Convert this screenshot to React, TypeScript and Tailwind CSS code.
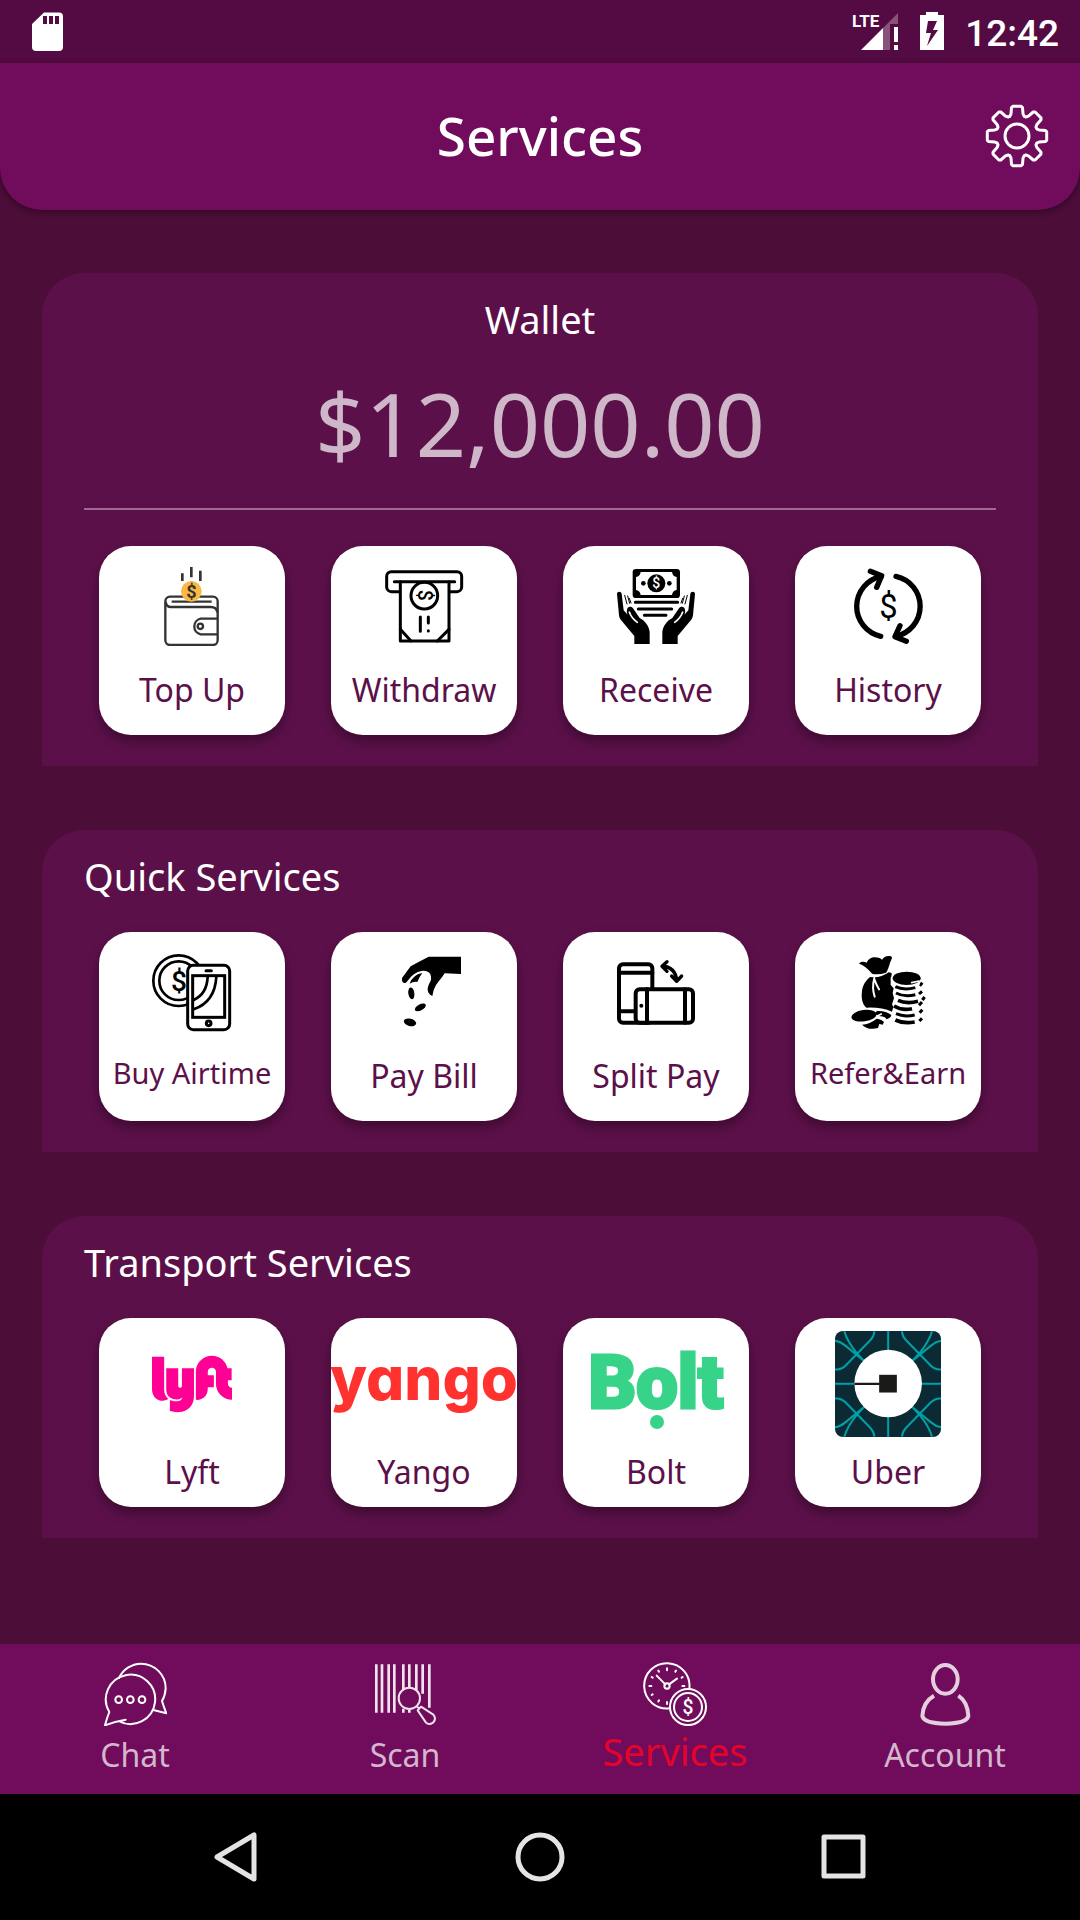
import type { ReactNode } from "react";
import { FaLyft } from "react-icons/fa";

type DollarProps = { x: number; y: number; size: number; fill?: string; weight?: number };

function Dollar({ x, y, size, fill = "#000", weight = 400 }: DollarProps) {
  return (
    <text x={x} y={y} fontSize={size} fontWeight={weight} fill={fill} stroke="none" textAnchor="middle" fontFamily="Roboto, sans-serif">
      $
    </text>
  );
}

function TileIcon({ viewBox, children }: { viewBox: string; children: ReactNode }) {
  return (
    <svg viewBox={viewBox} className="size-20" fill="none" stroke="#000" strokeLinecap="round" strokeLinejoin="round" aria-hidden="true">
      {children}
    </svg>
  );
}

function TopUpIcon() {
  return (
    <TileIcon viewBox="216 108 240 240">
      <g stroke="#333" strokeWidth="7" strokeLinecap="butt">
        <rect x="256" y="200" width="157" height="145" rx="14" />
        <path d="M275 215H395" />
        <path d="M257 216q2 15 16 15H392q18 0 20 16" />
        <path d="M412 266H362a24 24 0 0 0 0 47H412" />
        <circle cx="361" cy="289" r="8" />
        <path d="M307 130v23M334 111v31M361 122v31" strokeWidth="8" />
      </g>
      <circle cx="334" cy="184" r="31" fill="#fbb843" stroke="none" />
      <Dollar x={334} y={203} size={54} fill="#333" weight={700} />
    </TileIcon>
  );
}

function WithdrawIcon() {
  return (
    <TileIcon viewBox="912 108 240 240">
      <g strokeWidth="9">
        <path d="M958 185H934a14 14 0 0 1-14-14V139a14 14 0 0 1 14-14H1131a14 14 0 0 1 14 14v32a14 14 0 0 1-14 14H1108" />
        <path d="M943 155H1124" />
        <path d="M961 155V333H1107V155" />
        <circle cx="1033" cy="197" r="40" />
        <path d="M961 298L993 333M1107 298L1072 333" />
        <path d="M1021 261V304M1045 261V279M1045 302v1" />
      </g>
      <g transform="rotate(90 1033 196)">
        <Dollar x={1033} y={216} size={58} weight={500} />
      </g>
    </TileIcon>
  );
}

function Hand() {
  return (
    <g>
      <path
        d="M231 192c0-8 13-9 14 0l6 49 12 13c-3-6-3-8-2-14 1-10 11-13 18-5l20 29c17 9 28 24 30 42v36H283V318L243 270c-4-5-5-8-6-14z"
        fill="#000"
        stroke="none"
      />
      <path d="M268 246q6 18 24 31" stroke="#fff" strokeWidth="5" />
      <path d="M254 196l7 26M263 198l6 22M268 205l5 14" strokeWidth="3" />
    </g>
  );
}

function ReceiveIcon() {
  return (
    <TileIcon viewBox="228 108 240 240">
      <rect x="278" y="117" width="142" height="87" rx="10" fill="#000" stroke="none" />
      <path d="M302 126H396q2 14 14 15V180q-12 2-14 15H302q-2-13-14-15V141q12-1 14-15z" fill="#fff" stroke="none" />
      <circle cx="349" cy="160" r="27" fill="#000" stroke="none" />
      <Dollar x={349} y={175} size={42} fill="#fff" weight={500} />
      <circle cx="310" cy="160" r="7" fill="#000" stroke="none" />
      <circle cx="388" cy="160" r="7" fill="#000" stroke="none" />
      <path d="M286 217H413M295 237H395M313 256H378" strokeWidth="9" />
      <Hand />
      <g transform="translate(696 0) scale(-1 1)">
        <Hand />
      </g>
    </TileIcon>
  );
}

function HistoryIcon() {
  return (
    <TileIcon viewBox="924 108 240 240">
      <g strokeWidth="16">
        <path d="M1022 319A92 92 0 0 1 1024 139" />
        <path d="M991 124L1025 137L1010 172" />
        <path d="M1068 139A92 92 0 0 1 1067 319" />
        <path d="M1080 287L1065 320L1099 334" />
      </g>
      <Dollar x={1045} y={264} size={98} />
    </TileIcon>
  );
}

function AirtimeIcon() {
  return (
    <TileIcon viewBox="216 396 240 240">
      <g strokeWidth="8">
        <circle cx="296" cy="482" r="76" />
        <circle cx="296" cy="482" r="58" />
      </g>
      <Dollar x={297} y={512} size={84} weight={500} />
      <g strokeWidth="9">
        <rect x="323" y="436" width="126" height="193" rx="17" fill="#fff" />
        <rect x="338" y="467" width="96" height="125" strokeLinejoin="miter" />
        <path d="M378 452H394" />
        <circle cx="386" cy="610" r="7" />
        <path d="M383 470q-2 52-42 70M409 470q-4 76-68 98" strokeWidth="8" />
      </g>
    </TileIcon>
  );
}

function PayBillIcon() {
  return (
    <TileIcon viewBox="912 396 240 240">
      <g fill="#000" stroke="none">
        <path d="M1046 410H1143V462L1094 460C1086 474 1078 480 1068 495Q1060 508 1057 528Q1042 522 1043 505Q1045 494 1052 482Q1056 468 1048 458Q1038 450 1024 453Q1002 458 988 476L978 488Q967 491 966 480V474L992 439Q1018 424 1046 410z" />
        <path d="M1027 459Q998 464 989 491Q1000 484 1012 486Q1017 472 1027 459z" />
        <ellipse cx="994" cy="520" rx="9" ry="18" transform="rotate(-8 994 520)" />
        <ellipse cx="1021" cy="562" rx="18" ry="9" transform="rotate(-28 1021 562)" />
        <ellipse cx="990" cy="607" rx="19" ry="11" transform="rotate(14 990 607)" />
      </g>
    </TileIcon>
  );
}

function SplitPayIcon() {
  return (
    <TileIcon viewBox="228 396 240 240">
      <g strokeWidth="12">
        <rect x="237" y="433" width="100" height="175" rx="12" />
        <path d="M237 458H337M237 574H288" />
        <rect x="287" y="508" width="172" height="100" rx="12" fill="#fff" />
        <path d="M321 508V608M435 508V608" />
      </g>
      <circle cx="304" cy="557" r="6" fill="#000" stroke="none" />
      <path d="M367 438Q407 442 410 482M381 425L366 439L381 454M395 468L410 484L425 468" strokeWidth="10" />
    </TileIcon>
  );
}

function ReferIcon() {
  return (
    <TileIcon viewBox="924 396 240 240">
      <g fill="#000" stroke="none">
        <path d="M957 431c6-8 15-7 23-3 6-12 14-16 24-16s16 2 22 7c7-9 14-12 22-11s9 4 7 9c-7 13-9 32-17 41q-20 7-40 4c-12-11-24-27-41-31z" />
        <path d="M990 471q30 5 56-14l9 2q0 12-3 14v22l9 10-3 14 4 16-6 18 4 8-4 14q-32-14-77-12c-12-10-16-28-13-50 3-20 12-32 24-42z" />
        <ellipse cx="1100" cy="475" rx="42" ry="20" />
        <ellipse cx="972" cy="587" rx="38" ry="17" transform="rotate(-8 972 587)" />
        <path d="M1010 573q26-2 44 12-2 10-14 13-6-10-24-10l-10-6z" />
        <path d="M966 614q24-2 44-18 16 2 22 10l-4 8-10-2-4 12q-30 8-48-10z" />
      </g>
      <path d="M1003 474q-8 30 1 56M1003 478q8 20 14 30" stroke="#fff" strokeWidth="6" />
      <g strokeWidth="9" strokeLinecap="butt">
        <path d="M1066 500q24 12 60 3" />
        <path d="M1068 519q24 13 58 5" />
        <path d="M1074 541q26 12 60 3" strokeWidth="11" />
        <path d="M1062 558q24 15 54 8" strokeWidth="11" />
        <path d="M1068 581q24 11 56 4" />
        <path d="M1066 600q24 12 58 6" strokeWidth="11" />
        <path d="M1139 497l8-9M1137 522l9-8M1147 540l7-9M1137 556l9-10M1139 578l8-9M1138 603l8-8" />
      </g>
      <path d="M1115 488l22-5v10M1012 588l12-6" stroke="#fff" strokeWidth="5" />
    </TileIcon>
  );
}

function LyftLogo() {
  return <FaLyft className="size-20 text-[#ff0094]" aria-hidden="true" />;
}

function YangoLogo() {
  return (
    <span className="pb-3 font-[Inter] text-[60px] leading-none font-extrabold text-[#ff3230] [font-feature-settings:'cv11']" aria-hidden="true">
      yango
    </span>
  );
}

function BoltLogo() {
  return (
    <svg viewBox="0 0 150 120" className="h-[120px] w-[150px]" fill="#37d388" aria-hidden="true">
      <text x="75" y="84" fontSize="74" fontWeight="900" textAnchor="middle" fontFamily="Roboto, sans-serif" stroke="#37d388" strokeWidth="3">
        Bolt
      </text>
      <circle cx="76" cy="98" r="7" />
    </svg>
  );
}

function UberCorner() {
  return (
    <path d="M886 390Q902 392 916 404L972 450M914 362Q922 392 952 428L972 450M1004 362Q1002 378 992 388L918 464Q904 478 886 476" />
  );
}

function UberLogo() {
  return (
    <svg viewBox="886 361 317 317" className="size-[106px] rounded-lg" fill="none" aria-hidden="true">
      <rect x="886" y="361" width="317" height="317" fill="#0b2a34" />
      <g stroke="#00a0a8" strokeWidth="6">
        <UberCorner />
        <g transform="translate(2090 0) scale(-1 1)">
          <UberCorner />
        </g>
        <g transform="translate(0 1039) scale(1 -1)">
          <UberCorner />
        </g>
        <g transform="translate(2090 1039) scale(-1 -1)">
          <UberCorner />
        </g>
        <path d="M1045 361V678M886 519H1203" />
      </g>
      <circle cx="1045" cy="518" r="101" fill="#fff" />
      <path d="M944 519H1020" stroke="#1a1a18" strokeWidth="7" />
      <rect x="1018" y="492" width="53" height="53" fill="#1a1a18" />
    </svg>
  );
}

function gearPath(): string {
  const points: string[] = [];
  for (let i = 0; i < 8; i++) {
    const angle = i * 45;
    const corners: [number, number][] = [
      [21, angle - 20],
      [23, angle - 15],
      [29, angle - 11],
      [30, angle - 8],
      [30, angle + 8],
      [29, angle + 11],
      [23, angle + 15],
      [21, angle + 20],
    ];
    for (const [r, deg] of corners) {
      const a = ((deg - 90) * Math.PI) / 180;
      points.push(`${(32 + r * Math.cos(a)).toFixed(1)} ${(32 + r * Math.sin(a)).toFixed(1)}`);
    }
  }
  return `M${points.join("L")}z`;
}

function GearIcon() {
  return (
    <svg viewBox="0 0 64 64" className="size-16" fill="none" stroke="#fff" strokeWidth="3" strokeLinejoin="round" aria-hidden="true">
      <path d={gearPath()} />
      <circle cx="32" cy="32" r="12" />
    </svg>
  );
}

function NavIcon({ viewBox, stroke, width, children }: { viewBox: string; stroke: string; width: number; children: ReactNode }) {
  return (
    <svg viewBox={viewBox} className="size-16" fill="none" stroke={stroke} strokeWidth={width} strokeLinecap="round" strokeLinejoin="round" aria-hidden="true">
      {children}
    </svg>
  );
}

function ChatIcon() {
  return (
    <NavIcon viewBox="129 96 192 192" stroke="#fff" width={6}>
      <path d="M177 144A74 74 0 0 1 243 101A74 74 0 0 1 317 175Q316 196 306 213Q311 230 319 250L280 240" />
      <path d="M178 274A74 74 0 1 0 148 246Q140 266 135 286Q165 274 197 269" />
      <circle cx="176" cy="209" r="10" />
      <circle cx="211" cy="209" r="10" />
      <circle cx="246" cy="209" r="10" />
    </NavIcon>
  );
}

function ScanIcon() {
  return (
    <NavIcon viewBox="939 96 192 192" stroke="#f1e3ee" width={6}>
      <g strokeWidth="8" strokeLinecap="butt">
        <path d="M949 103V248M966 103V248M986 103V248M1003 103V248M1030 103V180M1048 103V172M1069 103V180M1088 103V191M1108 103V233" />
        <path d="M1030 236V248M1048 240V248" />
      </g>
      <circle cx="1048" cy="205" r="32" />
      <path d="M1071 230l6 5M1083 230L1120 254Q1130 266 1120 277Q1107 287 1098 278L1073 241z" />
    </NavIcon>
  );
}

function ServicesIcon() {
  return (
    <NavIcon viewBox="309 96 192 192" stroke="#fff" width={6}>
      <path d="M389 235A68 68 0 1 1 448 176" />
      <path d="M350 137L376 163M387 163L411 146" />
      <circle cx="381" cy="168" r="8" />
      <path d="M381 115v6M381 216v6M328 168h6M427 168h6M355 122l2 3M408 122l-2 3M335 141l3 2M428 141l-3 2M335 195l3-2M355 214l2-3" />
      <circle cx="444" cy="231" r="54" />
      <circle cx="444" cy="231" r="42" />
      <Dollar x={444} y={251} size={58} fill="#fff" weight={500} />
    </NavIcon>
  );
}

function AccountIcon() {
  return (
    <NavIcon viewBox="1119 96 192 192" stroke="#e4cfe0" width={12}>
      <ellipse cx="1216" cy="148" rx="37" ry="43" />
      <path d="M1182 197Q1149 216 1147 258Q1152 280 1216 281Q1280 280 1285 258Q1283 216 1255 197" strokeLinecap="butt" />
    </NavIcon>
  );
}

function StatusBar() {
  return (
    <div className="flex items-center justify-between bg-[#540a42] pr-[21px] pl-8">
      <svg viewBox="0 0 32 63" className="h-[63px] w-8" fill="#fff" aria-hidden="true">
        <path fillRule="evenodd" d="M12 12.500H27a4 4 0 0 1 4 4V47a4 4 0 0 1-4 4H4a4 4 0 0 1-4-4V24zM11 16v8h4v-8zM17 16v8h4v-8zM23 16v8h4v-8z" />
      </svg>
      <div className="flex items-center">
        <svg viewBox="0 0 48 63" className="h-[63px] w-12" fill="#fff" role="img" aria-label="LTE">
          <text x="0" y="27" fontSize="17" fontWeight="700" fontFamily="Roboto, sans-serif">
            LTE
          </text>
          <path d="M9 50L31 28V50z" />
          <path d="M31 28L46 13V24H38V50H31z" opacity="0.3" />
          <path d="M42 27h4v15h-4zM42 45h4v5h-4z" />
        </svg>
        <svg viewBox="0 0 24 63" className="ml-5 h-[63px] w-6" fill="#fff" aria-hidden="true">
          <path fillRule="evenodd" d="M6 12H18V15H24V50H0V15H6zM8 21L6 33H11L7 46L18 30H13L17 21z" />
        </svg>
        <span className="ml-[21px] pt-1 font-[Roboto] text-[37px] leading-[42px] font-medium text-white">12:42</span>
      </div>
    </div>
  );
}

type Tile = { label: string; icon: ReactNode; small?: boolean };

function ServiceTile({ tile, logo }: { tile: Tile; logo?: boolean }) {
  return (
    <button
      type="button"
      className="flex h-[189px] w-full max-w-[186px] flex-col items-center rounded-[32px] bg-white whitespace-nowrap text-[#5c1049] shadow-[0_6px_12px_rgba(0,0,0,0.35)]"
    >
      {logo ? (
        <span className="mt-1.5 mb-1.5 flex h-[120px] items-center justify-center">{tile.icon}</span>
      ) : (
        <span className="mt-5 mb-[22px] flex h-20 items-center justify-center">{tile.icon}</span>
      )}
      {tile.small ? (
        <span className="text-[29px] leading-[38px]">{tile.label}</span>
      ) : (
        <span className="text-[32px] leading-[44px]">{tile.label}</span>
      )}
    </button>
  );
}

function TileRow({ tiles, logo }: { tiles: Tile[]; logo?: boolean }) {
  return (
    <div className="-mx-2 grid grid-cols-4 justify-items-center">
      {tiles.map((tile) => (
        <ServiceTile key={tile.label} tile={tile} logo={logo} />
      ))}
    </div>
  );
}

function Panel({ children }: { children: ReactNode }) {
  return <section className="rounded-t-[42px] bg-[#5c1049] px-[42px] pt-[21px] pb-[31px]">{children}</section>;
}

const walletTiles: Tile[] = [
  { label: "Top Up", icon: <TopUpIcon /> },
  { label: "Withdraw", icon: <WithdrawIcon /> },
  { label: "Receive", icon: <ReceiveIcon /> },
  { label: "History", icon: <HistoryIcon /> },
];

const quickTiles: Tile[] = [
  { label: "Buy Airtime", icon: <AirtimeIcon />, small: true },
  { label: "Pay Bill", icon: <PayBillIcon /> },
  { label: "Split Pay", icon: <SplitPayIcon /> },
  { label: "Refer&Earn", icon: <ReferIcon />, small: true },
];

const transportTiles: Tile[] = [
  { label: "Lyft", icon: <LyftLogo /> },
  { label: "Yango", icon: <YangoLogo /> },
  { label: "Bolt", icon: <BoltLogo /> },
  { label: "Uber", icon: <UberLogo /> },
];

const tabs = [
  { label: "Chat", icon: <ChatIcon />, active: false },
  { label: "Scan", icon: <ScanIcon />, active: false },
  { label: "Services", icon: <ServicesIcon />, active: true },
  { label: "Account", icon: <AccountIcon />, active: false },
];

function SystemBar() {
  return (
    <div className="grid grid-cols-3 justify-items-center bg-black px-[84px] py-[31px]">
      <button type="button" aria-label="Back">
        <svg viewBox="0 0 64 64" className="size-16" fill="none" stroke="#e4e4e4" strokeWidth="5" strokeLinejoin="round">
          <path d="M50 10V54L13 32z" />
        </svg>
      </button>
      <button type="button" aria-label="Home">
        <svg viewBox="0 0 64 64" className="size-16" fill="none" stroke="#e4e4e4" strokeWidth="5">
          <circle cx="32" cy="32" r="22" />
        </svg>
      </button>
      <button type="button" aria-label="Overview">
        <svg viewBox="0 0 64 64" className="size-16" fill="none" stroke="#e4e4e4" strokeWidth="5" strokeLinejoin="round">
          <rect x="12" y="12" width="39" height="39" />
        </svg>
      </button>
    </div>
  );
}

export default function App() {
  return (
    <div className="flex min-h-screen flex-col bg-[#4c0d38] font-['Noto_Sans',sans-serif]">
      <StatusBar />
      <header className="grid grid-cols-[1fr_auto_1fr] items-center rounded-b-[42px] bg-[#700c5b] px-[31px] pt-[37px] pb-[39px] shadow-[0_2px_6px_rgba(0,0,0,0.4)]">
        <h1 className="col-start-2 text-[53px] leading-[71px] font-medium text-white">Services</h1>
        <button type="button" aria-label="Settings" className="justify-self-end">
          <GearIcon />
        </button>
      </header>

      <main className="flex flex-1 flex-col gap-16 px-[42px] pt-[63px]">
        <Panel>
          <h2 className="text-center text-[38px] leading-[50px] text-white">Wallet</h2>
          <p className="mt-[19px] text-center text-[88px] leading-[120px] text-[#ceb7c8]">$12,000.00</p>
          <hr className="mt-[25px] mb-9 border-t-2 border-[#9d6c92]" />
          <TileRow tiles={walletTiles} />
        </Panel>
        <Panel>
          <h2 className="mb-[31px] text-[38px] leading-[50px] text-white">Quick Services</h2>
          <TileRow tiles={quickTiles} />
        </Panel>
        <Panel>
          <h2 className="mb-[31px] text-[38px] leading-[50px] text-white">Transport Services</h2>
          <TileRow tiles={transportTiles} logo />
        </Panel>
      </main>

      <nav className="grid grid-cols-4 bg-[#700c5b] pt-[18px] pb-[18px]">
        {tabs.map((tab) => (
          <a key={tab.label} href={`#${tab.label.toLowerCase()}`} aria-current={tab.active ? "page" : undefined} className="flex flex-col items-center gap-2">
            {tab.icon}
            {tab.active ? (
              <span className="text-[38px] leading-[34px] text-[#e4032b]">{tab.label}</span>
            ) : (
              <span className="text-[32px] leading-[42px] text-[#d4b6ce]">{tab.label}</span>
            )}
          </a>
        ))}
      </nav>
      <SystemBar />
    </div>
  );
}
